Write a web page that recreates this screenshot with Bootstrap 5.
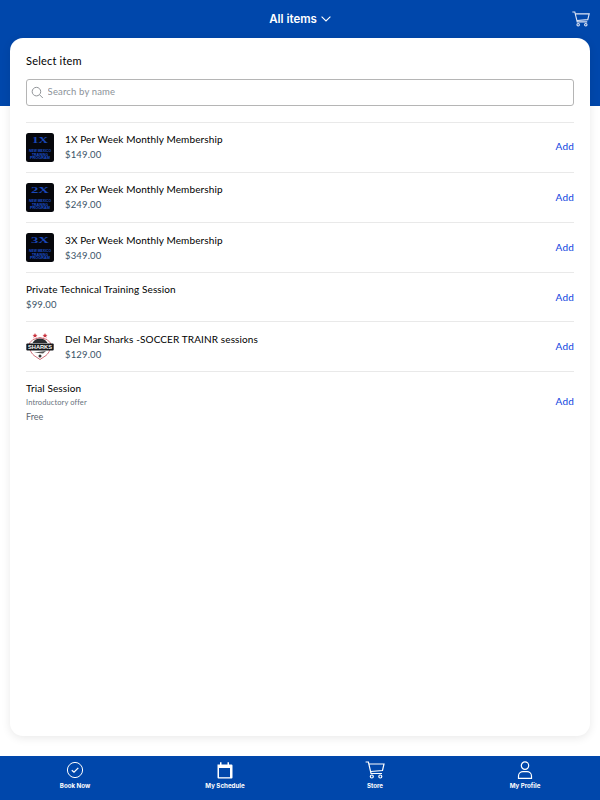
<!DOCTYPE html>
<html lang="en"><head><meta charset="utf-8"><title>Select item</title>
<link href="https://cdn.jsdelivr.net/npm/bootstrap@5.3.0/dist/css/bootstrap.min.css" rel="stylesheet">
<style>
html,body{height:100%}
body{width:600px;height:800px;overflow:hidden;background:#fff;font-family:"Lato","Noto Sans",sans-serif;color:#000}
.shell{height:800px}
.band{background:#0047ab;height:106px;flex:none}
.topbar{height:38px;color:#fff;position:relative}
.top-title{font-family:"Inter",sans-serif;font-weight:600;font-size:11.5px;line-height:38px}
.top-cart{position:absolute;right:10px;top:11px}
.sheet{flex:none;height:698px;margin:-68px 10px 0;background:#fff;border-radius:13px;box-shadow:0 2px 10px rgba(0,0,0,.09);padding:16px;position:relative}
.sheet-title{font-size:11px;line-height:14px;letter-spacing:.2px;margin-bottom:11px}
.searchbox{height:27px;border:1px solid #b5b5b5;border-radius:3px;padding-left:4px;margin-bottom:16px}
.searchbox input{border:0;outline:0;background:none;font:inherit;font-size:9.5px;width:100%;padding:0;letter-spacing:.15px}
.searchbox input::placeholder{color:#8c9299;opacity:1}
.item-row{border-top:1px solid #e9e9e9;height:50px}
.item-row.h49{height:49px}
.item-row.tall{height:60px}
.thumb{width:28px;height:29px;flex:none;margin-right:11px;display:block}
.lift{margin-bottom:2px}
.item-name{font-size:10px;line-height:13px;letter-spacing:.12px}
.item-price{font-size:9.5px;line-height:13px;color:#3b5468;margin-top:2px;letter-spacing:.15px}
.item-note{font-size:7.5px;line-height:10px;color:#68727c;margin-top:3px;letter-spacing:.1px}
.item-free{font-size:9px;line-height:12px;color:#5b6670;margin-top:3px}
.trial-text{padding-top:1px}
.add-link{font-size:10px;color:#0d3fe0;text-decoration:none;letter-spacing:.2px}
.tabbar{margin-top:20px;height:44px;background:#0047ab;flex:none}
.tab-item{flex:1 1 25%;color:#fff;text-decoration:none;padding-top:5px}
.tab-item svg{display:block;height:18px;width:20px}
.tab-label{font-family:"Inter",sans-serif;font-weight:700;font-size:6.2px;line-height:10px;margin-top:2px}
</style></head>
<body>
<div class="shell d-flex flex-column">
  <div class="band">
    <div class="topbar d-flex justify-content-center">
      <div class="top-title d-flex align-items-center gap-1">All items
        <svg width="10" height="6" viewBox="0 0 10 6" fill="none" stroke="#fff" stroke-width="1.100"><path d="M.6.7 5 5 9.400.7"/></svg></div>
      <svg class="top-cart" width="18" height="16" viewBox="0 0 19 17" fill="none" stroke="#dfe6f5" stroke-width="1.200"><path d="M.3 1h2.600l2.600 10.600h10.600M3.600 3h14.600l-1.500 6.200-11.300.9"/><circle cx="6.500" cy="14.600" r="1.300"/><circle cx="14.600" cy="14.600" r="1.300"/></svg>
    </div>
  </div>
  <div class="sheet">
    <div class="sheet-title">Select item</div>
    <div class="searchbox d-flex align-items-center gap-1">
      <svg class="flex-none" width="13" height="13" viewBox="0 0 13 13" fill="none" stroke="#8d9195" stroke-width="1"><circle cx="5.600" cy="5.600" r="4.400"/><path d="m8.800 8.800 3.400 3.400"/></svg>
      <input type="text" placeholder="Search by name" aria-label="Search by name">
    </div>
    <div class="item-row d-flex align-items-center">
      <svg class="thumb" viewBox="0 0 28 29"><rect width="28" height="29" rx="2.500" fill="#06070c"/><text x="14" y="9.500" text-anchor="middle" font-family="Liberation Serif" font-weight="700" font-size="9" textLength="16" lengthAdjust="spacingAndGlyphs" fill="#1a47b8">1X</text><text x="14" y="19" text-anchor="middle" font-family="Liberation Sans" font-weight="700" font-size="3.300" textLength="22" lengthAdjust="spacingAndGlyphs" fill="#1b4fc9">NEW MEXICO</text><text x="14" y="22.500" text-anchor="middle" font-family="Liberation Sans" font-weight="700" font-size="3.300" textLength="16" lengthAdjust="spacingAndGlyphs" fill="#1b4fc9">TRAINING</text><text x="14" y="26" text-anchor="middle" font-family="Liberation Sans" font-weight="700" font-size="3.300" textLength="20" lengthAdjust="spacingAndGlyphs" fill="#1b4fc9">PROGRAM</text></svg>
      <div class="flex-grow-1 lift"><div class="item-name">1X Per Week Monthly Membership</div><div class="item-price">$149.00</div></div>
      <a class="add-link lift" href="#">Add</a>
    </div>
    <div class="item-row d-flex align-items-center">
      <svg class="thumb" viewBox="0 0 28 29"><rect width="28" height="29" rx="2.500" fill="#06070c"/><text x="14" y="9.500" text-anchor="middle" font-family="Liberation Serif" font-weight="700" font-size="9" textLength="18" lengthAdjust="spacingAndGlyphs" fill="#1a47b8">2X</text><text x="14" y="19" text-anchor="middle" font-family="Liberation Sans" font-weight="700" font-size="3.300" textLength="22" lengthAdjust="spacingAndGlyphs" fill="#1b4fc9">NEW MEXICO</text><text x="14" y="22.500" text-anchor="middle" font-family="Liberation Sans" font-weight="700" font-size="3.300" textLength="16" lengthAdjust="spacingAndGlyphs" fill="#1b4fc9">TRAINING</text><text x="14" y="26" text-anchor="middle" font-family="Liberation Sans" font-weight="700" font-size="3.300" textLength="20" lengthAdjust="spacingAndGlyphs" fill="#1b4fc9">PROGRAM</text></svg>
      <div class="flex-grow-1 lift"><div class="item-name">2X Per Week Monthly Membership</div><div class="item-price">$249.00</div></div>
      <a class="add-link" href="#">Add</a>
    </div>
    <div class="item-row d-flex align-items-center">
      <svg class="thumb" viewBox="0 0 28 29"><rect width="28" height="29" rx="2.500" fill="#06070c"/><text x="14" y="9.500" text-anchor="middle" font-family="Liberation Serif" font-weight="700" font-size="9" textLength="18" lengthAdjust="spacingAndGlyphs" fill="#1a47b8">3X</text><text x="14" y="19" text-anchor="middle" font-family="Liberation Sans" font-weight="700" font-size="3.300" textLength="22" lengthAdjust="spacingAndGlyphs" fill="#1b4fc9">NEW MEXICO</text><text x="14" y="22.500" text-anchor="middle" font-family="Liberation Sans" font-weight="700" font-size="3.300" textLength="16" lengthAdjust="spacingAndGlyphs" fill="#1b4fc9">TRAINING</text><text x="14" y="26" text-anchor="middle" font-family="Liberation Sans" font-weight="700" font-size="3.300" textLength="20" lengthAdjust="spacingAndGlyphs" fill="#1b4fc9">PROGRAM</text></svg>
      <div class="flex-grow-1"><div class="item-name">3X Per Week Monthly Membership</div><div class="item-price">$349.00</div></div>
      <a class="add-link" href="#">Add</a>
    </div>
    <div class="item-row h49 d-flex align-items-center">
      <div class="flex-grow-1"><div class="item-name">Private Technical Training Session</div><div class="item-price">$99.00</div></div>
      <a class="add-link" href="#">Add</a>
    </div>
    <div class="item-row d-flex align-items-center">
      <svg class="thumb" viewBox="0 0 28 29"><path d="M14 5.500 7 7.500 3.500 11c-.7 5 1 9.500 4.500 12.500l6 4 6-4c3.500-3 5.200-7.500 4.500-12.500L21 7.500z" fill="#fff" stroke="#c9616c" stroke-width=".9"/><path d="M6.500 11c2-3.500 4.500-4.500 7.500-4.500s5.500 1 7.500 4.500z" fill="#2a2c30"/><path d="m9 1 .7 1.700 1.800.2-1.400 1.100.5 1.800L9 4.800l-1.600 1 .5-1.800-1.400-1.100 1.800-.2zm10 0 .7 1.700 1.800.2-1.400 1.100.5 1.800-1.600-1-1.600 1 .5-1.800-1.400-1.100 1.800-.2z" fill="#c9303c"/><rect x=".3" y="11.500" width="27.400" height="7" rx="1" fill="#15171b"/><text x="14" y="16.800" text-anchor="middle" font-family="Liberation Sans" font-weight="700" font-size="5.200" textLength="24" lengthAdjust="spacingAndGlyphs" fill="#fff">SHARKS</text><path d="M8 20.500 20 19l-3 2.500z" fill="#555"/><circle cx="14" cy="24" r="1.500" fill="#333"/></svg>
      <div class="flex-grow-1"><div class="item-name">Del Mar Sharks -SOCCER TRAINR sessions</div><div class="item-price">$129.00</div></div>
      <a class="add-link" href="#">Add</a>
    </div>
    <div class="item-row tall d-flex align-items-center">
      <div class="flex-grow-1 trial-text"><div class="item-name">Trial Session</div><div class="item-note">Introductory offer</div><div class="item-free">Free</div></div>
      <a class="add-link" href="#">Add</a>
    </div>
  </div>
  <nav class="tabbar d-flex">
    <a class="tab-item d-flex flex-column align-items-center" href="#">
      <svg viewBox="0 0 20 18" fill="none" stroke="#fff" stroke-width="1"><circle cx="10" cy="9" r="7.600"/><path d="m6.800 9.200 2.200 2 4.300-4.300" stroke-width="1.300"/></svg>
      <span class="tab-label">Book Now</span></a>
    <a class="tab-item d-flex flex-column align-items-center" href="#">
      <svg viewBox="0 0 20 18"><path d="M3 3.500h2.500V1.200h1.500v2.300h6V1.200h1.500v2.300H17a1 1 0 0 1 1 1V16.500a1 1 0 0 1-1 1H4a1 1 0 0 1-1-1z" fill="#fff" transform="translate(-.5 0)"/><rect x="4" y="7" width="11" height="9.200" fill="#0047ab"/></svg>
      <span class="tab-label">My Schedule</span></a>
    <a class="tab-item d-flex flex-column align-items-center" href="#">
      <svg viewBox="0 0 20 18" fill="none" stroke="#fff" stroke-width="1.200"><path d="M.6 1h2.800l2.600 11.500h11M4 3h15l-1.500 6.500-11.700 1"/><circle cx="6.800" cy="15.500" r="1.500"/><circle cx="15.300" cy="15.500" r="1.500"/></svg>
      <span class="tab-label">Store</span></a>
    <a class="tab-item d-flex flex-column align-items-center" href="#">
      <svg viewBox="0 0 20 18" fill="none" stroke="#fff" stroke-width="1.200"><circle cx="10" cy="4.600" r="3.700"/><path d="M3.500 17.300v-2.300c0-3 2.500-4.300 4.500-4.300h4c2 0 4.500 1.300 4.500 4.300v2.300z"/></svg>
      <span class="tab-label">My Profile</span></a>
  </nav>
</div>
<script src="https://cdn.jsdelivr.net/npm/bootstrap@5.3.0/dist/js/bootstrap.bundle.min.js"></script>
</body></html>
